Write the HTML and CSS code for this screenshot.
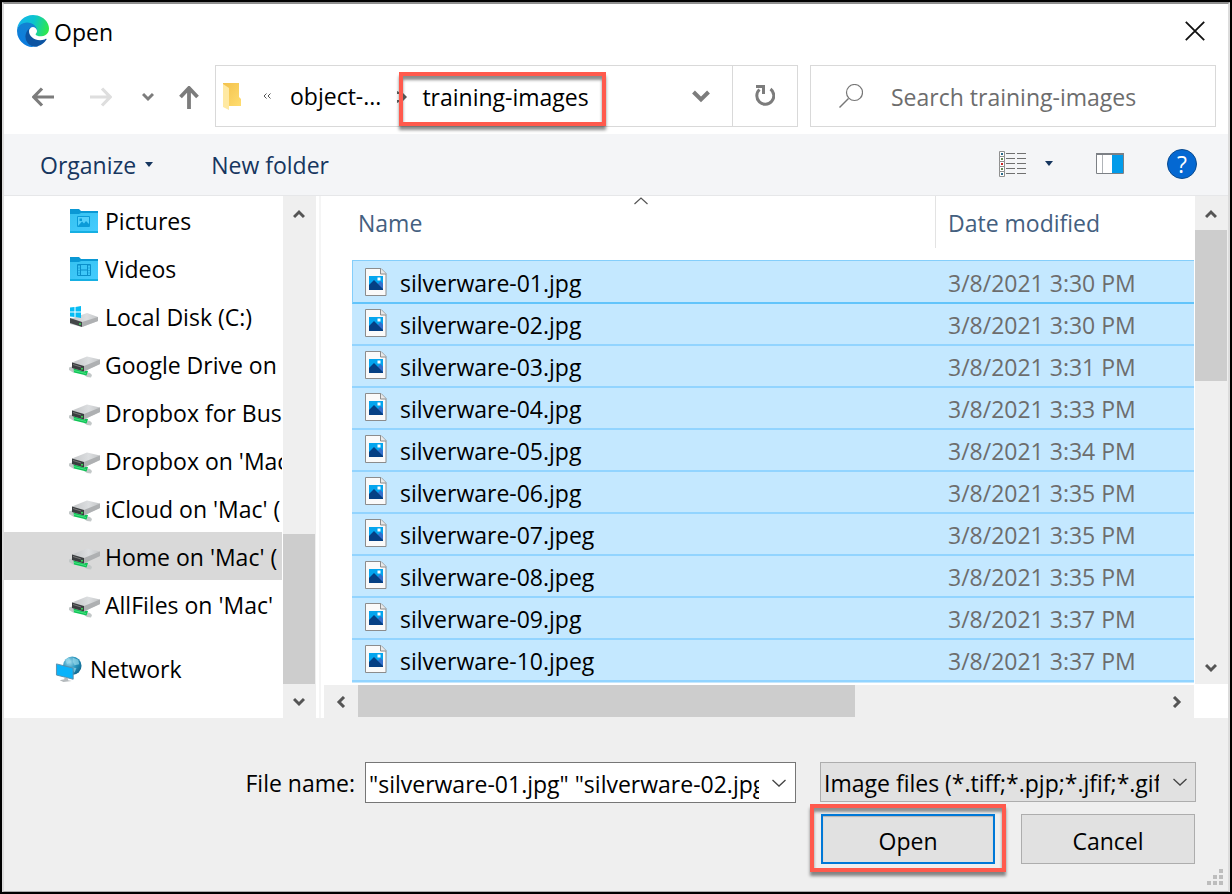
FILE: index.html
```html
<!DOCTYPE html>
<html lang="en">
<head>
<meta charset="utf-8">
<meta name="viewport" content="width=device-width, initial-scale=1">
<title>Open</title>
<link rel="stylesheet" href="styles.css">
</head>
<body>
<svg class="defs" aria-hidden="true">
  <defs>
    <linearGradient id="edgeTop" x1="0" y1="0.3" x2="1" y2="0.5"><stop offset="0" stop-color="#16b4ee"/><stop offset="0.5" stop-color="#0cc4cf"/><stop offset="1" stop-color="#2fe84c"/></linearGradient>
    <linearGradient id="edgeLeft" x1="0.6" y1="0" x2="0.3" y2="1"><stop offset="0" stop-color="#1483cf"/><stop offset="1" stop-color="#0a7be0"/></linearGradient>
    <linearGradient id="folderBody" x1="0" y1="0" x2="1" y2="1"><stop offset="0" stop-color="#36c2f0"/><stop offset="1" stop-color="#45ccff"/></linearGradient>
    <linearGradient id="metal" x1="0" y1="0" x2="1" y2="0"><stop offset="0" stop-color="#c4c6c8"/><stop offset="0.6" stop-color="#dcdee0"/><stop offset="1" stop-color="#c4c6c8"/></linearGradient>
    <radialGradient id="globe" cx="0.35" cy="0.3" r="0.8"><stop offset="0" stop-color="#a4dcee"/><stop offset="0.5" stop-color="#2794bd"/><stop offset="1" stop-color="#0c6088"/></radialGradient>
    <linearGradient id="yellow" x1="0" y1="0" x2="1" y2="1"><stop offset="0" stop-color="#f3c14b"/><stop offset="1" stop-color="#ffdd70"/></linearGradient>
    <symbol id="netdrive" viewBox="0 0 32 22">
      <path d="M0 11.500L3 10.500L7 13L5 17L0 14Z" fill="#c3c8c8"/>
      <path d="M16 16L21 17L23 19L22 21.500L18 21L15 19Z" fill="#c3c8c8"/>
      <path d="M4.500 12L19 15L17.500 19.500L5 16.500Z" fill="#0fc456"/>
      <path d="M5 14.500L17 17.500" stroke="#47e283" stroke-width="1"/>
      <path d="M3 6.500L18 .5L31 3.500V8L15 15.500L3 12Z" fill="url(#metal)"/>
      <path d="M15 10L31 3.500V8L15 15.500Z" fill="#aeb0b2"/>
      <path d="M3 6.500L15 10V15.500L3 12Z" fill="#3a3d3f"/>
      <path d="M4 8.500L12 11" stroke="#777" stroke-width="1"/>
      <circle cx="13" cy="12.800" r="1" fill="#3adb59"/>
    </symbol>
    <symbol id="image-file" viewBox="0 0 22 28">
      <path d="M.5 .5H16L21 5.500V27.500H.5Z" fill="#fafafa" stroke="#8c8c8c"/>
      <path d="M15.500 .5V6H21" fill="#e8e8e8" stroke="#8c8c8c"/>
      <path d="M4 8H18V22H4Z" fill="#04a5ee"/>
      <path d="M12 17L15.500 13L18 15.500V22H12Z" fill="#3470cc"/>
      <path d="M4 17L9 12L18 21V22H4Z" fill="#054084"/>
      <path d="M12.500 9.500H15.500V12.500H12.500Z" fill="#fff"/>
    </symbol>
    <symbol id="chev-down" viewBox="0 0 12 10"><path d="M1 2L6 7L11 2" fill="none" stroke="#555" stroke-width="3"/></symbol>
    <symbol id="chev-up" viewBox="0 0 12 10"><path d="M1 8L6 3L11 8" fill="none" stroke="#555" stroke-width="3"/></symbol>
    <symbol id="thin-down" viewBox="0 0 14 8"><path d="M.5 1L7 7L13.500 1" fill="none" stroke="#444" stroke-width="1.300"/></symbol>
  </defs>
</svg>

<main class="dialog">
  <header class="titlebar">
    <svg class="logo" viewBox="0 0 256 256" aria-hidden="true">
      <path d="M231 190.500c-3.400 1.800-6.900 3.400-10.500 4.700a101.800 101.800 0 0 1-35.900 6.400c-47.300 0-88.500-32.500-88.500-74.300a31.500 31.500 0 0 1 16.400-27.300c-42.800 1.800-53.800 46.400-53.800 72.500 0 74 68.100 81.400 82.800 81.400 7.900 0 19.800-2.300 27-4.600l1.300-.4a128.300 128.300 0 0 0 66.600-52.800 4 4 0 0 0-5.400-5.600z" fill="#0c54a2"/>
      <path d="M105.700 241.400a79.200 79.200 0 0 1-22.700-21.300 80.700 80.700 0 0 1 29.500-120c3.200-1.500 8.500-4.100 15.600-4a32.400 32.400 0 0 1 25.700 13 31.900 31.900 0 0 1 6.300 18.700c0-.2 24.500-79.600-80-79.600-43.900 0-80 41.600-80 78.200a130.200 130.200 0 0 0 12.100 56 128 128 0 0 0 156.400 67 75.500 75.500 0 0 1-62.800-8z" fill="url(#edgeLeft)"/>
      <path d="M152.300 148.900c-.9 1-3.400 2.500-3.400 5.600 0 2.600 1.700 5.200 4.800 7.300 14.300 10 41.400 8.600 41.500 8.600 10.700 0 21.100-3 30.300-8.300a61.400 61.400 0 0 0 30.400-52.900c.3-22.400-8-37.300-11.300-43.900C223.500 23.900 177.700 0 128 0A128 128 0 0 0 0 126.200c.5-36.500 36.800-66 80-66 3.500 0 23.500.3 42 10 16.300 8.600 24.900 18.900 30.800 29.200 6.200 10.700 7.300 24.100 7.300 29.500 0 5.300-2.700 13.300-7.800 19.900z" fill="url(#edgeTop)"/>
    </svg>
    <h1 class="title">Open</h1>
    <button class="close" aria-label="Close"><svg viewBox="0 0 20 20"><path d="M.8 .8L19.200 19.200M19.200 .8L.8 19.200" stroke="#111" stroke-width="1.800"/></svg></button>
  </header>

  <nav class="navbar" aria-label="Location">
    <div class="arrows">
      <button aria-label="Back"><svg class="i-arrow" viewBox="0 0 22 20"><path d="M22 10H2M10 1.500L1.800 10L10 18.500" fill="none" stroke="#7c7c7c" stroke-width="3.200"/></svg></button>
      <button aria-label="Forward"><svg class="i-arrow" viewBox="0 0 22 20"><path d="M0 10H20M12 1.500L20.200 10L12 18.500" fill="none" stroke="#dedede" stroke-width="3.200"/></svg></button>
      <button aria-label="Recent locations"><svg class="i-recent" viewBox="0 0 12 10"><path d="M1 2L6 7L11 2" fill="none" stroke="#7c7c7c" stroke-width="3"/></svg></button>
      <button aria-label="Up"><svg class="i-up" viewBox="0 0 20 23"><path d="M10 23V2M1.500 11L10 2L18.500 11" fill="none" stroke="#7c7c7c" stroke-width="3.800"/></svg></button>
    </div>
    <div class="address">
      <svg class="i-folder" viewBox="0 0 18 27" aria-hidden="true"><path d="M0 0H16V14L18 16V23H0Z" fill="url(#yellow)"/><path d="M0 1L6 5V27L0 24Z" fill="#ffe9a2"/></svg>
      <svg class="i-more" viewBox="0 0 8 6" aria-hidden="true"><path d="M3.500 .5L1 3L3.500 5.500M7.500 .5L5 3L7.500 5.500" fill="none" stroke="#555" stroke-width="1"/></svg>
      <button class="crumb">object-...</button>
      <button class="crumb marked"><svg class="i-next" viewBox="0 0 10 12" aria-hidden="true"><path d="M0 0L2 1V3H0ZM0 9H2V11L0 12ZM6 2V10L10 6Z" fill="#555"/></svg>training-images</button>
      <button class="history" aria-label="Previous locations"><svg viewBox="0 0 18 13"><path d="M1.500 2L9 9.500L16.500 2" fill="none" stroke="#7c7c7c" stroke-width="4"/></svg></button>
      <button class="refresh" aria-label="Refresh"><svg viewBox="0 0 20 22"><path d="M15.500 4A8.500 8.500 0 1 1 4.500 4.500" fill="none" stroke="#7c7c7c" stroke-width="3"/><path d="M1 0H10V9H7V3H1Z" fill="#7c7c7c"/></svg></button>
    </div>
    <label class="search">
      <svg viewBox="0 0 24 24" aria-hidden="true"><circle cx="15.500" cy="8.500" r="8" fill="none" stroke="#777" stroke-width="1.200"/><path d="M9.500 14.500L.5 23.500" stroke="#777" stroke-width="1.400"/></svg>
      <input type="search" placeholder="Search training-images" aria-label="Search training-images">
    </label>
  </nav>

  <div class="toolbar">
    <button>Organize <svg class="i-tri" viewBox="0 0 8 5" aria-hidden="true"><path d="M0 0H8L4 5Z" fill="#16365f"/></svg></button>
    <button>New folder</button>
    <div class="tools">
      <button class="view" aria-label="Change view">
        <svg class="i-view" viewBox="0 0 28 26"><g fill="#fff" stroke="#909090"><path d="M.5 .5H5.500V5.500H.5ZM.5 5.500H5.500V10.500H.5ZM.5 10.500H5.500V15.500H.5ZM.5 15.500H5.500V20.500H.5ZM.5 20.500H5.500V25.500H.5Z"/></g><path d="M7 2.500H16M18 2.500H27M7 7.500H16M18 7.500H27M7 12.500H16M18 12.500H27M7 17.500H16M18 17.500H27M7 22.500H16M18 22.500H27" stroke="#707070"/><path d="M2 2H4V4H2ZM2 22H4V24H2Z" fill="#2a6a8a"/><path d="M2 7H4V9H2ZM2 17H4V19H2Z" fill="#685"/><path d="M2 12H4V14H2Z" fill="#c22"/></svg>
        <svg class="i-tri" viewBox="0 0 8 5"><path d="M0 0H8L4 5Z" fill="#16365f"/></svg>
      </button>
      <button aria-label="Preview pane"><svg class="i-pane" viewBox="0 0 28 21"><path d="M.5 .5H27.500V20.500H.5Z" fill="#fff" stroke="#7c8085"/><path d="M0 0H28V2H0Z" fill="#7c8085"/><path d="M6.500 2V20" stroke="#b0b4b8"/><path d="M16 2H27V20H16Z" fill="#019bea"/></svg></button>
      <button class="help" aria-label="Help">?</button>
    </div>
  </div>

  <div class="body">
    <aside class="sidebar">
      <ul class="tree">
        <li><a href="#"><svg class="i-lib" viewBox="0 0 28 26"><path d="M0 1H9L11 3H28V10H0Z" fill="#0a98d4"/><path d="M0 6L9 6L11 5H28V25H0Z" fill="url(#folderBody)"/><path d="M0 23H28V25H0Z" fill="#16afe2"/><path d="M7.500 8.500H19.500V18.500H7.500Z" fill="#55d0fa" stroke="#0b9bd8"/><path d="M8 18L12 13.500L14 15.500L16 13L19 16V18ZM9.500 10.500H12V13H9.500Z" fill="#0b9bd8"/></svg>Pictures</a></li>
        <li><a href="#"><svg class="i-lib" viewBox="0 0 28 26"><path d="M0 1H9L11 3H28V10H0Z" fill="#0a98d4"/><path d="M0 6L9 6L11 5H28V25H0Z" fill="url(#folderBody)"/><path d="M0 23H28V25H0Z" fill="#16afe2"/><path d="M7.500 8.500H20.500V19.500H7.500ZM10.500 8.500V19.500M17.500 8.500V19.500M10.500 14H17.500" fill="none" stroke="#0b8fca"/><path d="M9 9V19M19 9V19" stroke="#0b8fca" stroke-dasharray="1 1.500"/></svg>Videos</a></li>
        <li><a href="#"><svg class="i-lib" viewBox="0 0 28 22"><path d="M0 13L17 7L28 11V15L12 21L0 18Z" fill="url(#metal)"/><path d="M12 16L28 11V15L12 21Z" fill="#aeb0b2"/><path d="M0 12L12 16V21L0 17Z" fill="#444749"/><circle cx="10" cy="18" r="1" fill="#3adb59"/><path d="M0 1.500L4.500 1V5.500H0ZM5.500 1L11 0V5.500H5.500ZM0 6.500H4.500V11L0 10.500ZM5.500 6.500H11V12L5.500 11Z" fill="#05bcf4"/></svg>Local Disk (C:)</a></li>
        <li><a href="#"><svg class="i-net"><use href="#netdrive"/></svg>Google Drive on</a></li>
        <li><a href="#"><svg class="i-net"><use href="#netdrive"/></svg>Dropbox for Busi</a></li>
        <li><a href="#"><svg class="i-net"><use href="#netdrive"/></svg>Dropbox on 'Mac'</a></li>
        <li><a href="#"><svg class="i-net"><use href="#netdrive"/></svg>iCloud on 'Mac' (</a></li>
        <li class="current"><a href="#"><svg class="i-net"><use href="#netdrive"/></svg>Home on 'Mac' (</a></li>
        <li><a href="#"><svg class="i-net"><use href="#netdrive"/></svg>AllFiles on 'Mac'</a></li>
        <li class="root"><a href="#"><svg class="i-lib" viewBox="0 0 28 28"><circle cx="17.500" cy="10.500" r="10" fill="url(#globe)"/><path d="M10 4L14 2L16 6L12 9ZM18 2L24 4L25 9L20 10L18 6ZM16 12L22 13L20 18Z" fill="#9bdcec" opacity=".65"/><path d="M.5 8.500L18.500 13V25L.5 20.500Z" fill="#0ab3fa" stroke="#5b8ca8"/><path d="M9 23L13 24V26L17 27L8 28L4 26L9 25Z" fill="#b5babd"/></svg>Network</a></li>
      </ul>
      <div class="vscroll">
        <button aria-label="Scroll up"><svg class="i-chev"><use href="#chev-up"/></svg></button>
        <div class="track low"><div class="thumb"></div></div>
        <button aria-label="Scroll down"><svg class="i-chev"><use href="#chev-down"/></svg></button>
      </div>
    </aside>

    <section class="files" aria-label="Files">
      <div class="list">
        <svg class="i-sort" viewBox="0 0 14 8" aria-hidden="true"><path d="M.5 7L7 1L13.500 7" fill="none" stroke="#555" stroke-width="1.200"/></svg>
        <table>
          <thead><tr><th class="c-name" scope="col">Name</th><th class="c-date" scope="col">Date modified</th></tr></thead>
          <tbody>
            <tr class="focused"><td><svg class="i-file"><use href="#image-file"/></svg>silverware-01.jpg</td><td>3/8/2021 3:30 PM</td></tr>
            <tr><td><svg class="i-file"><use href="#image-file"/></svg>silverware-02.jpg</td><td>3/8/2021 3:30 PM</td></tr>
            <tr><td><svg class="i-file"><use href="#image-file"/></svg>silverware-03.jpg</td><td>3/8/2021 3:31 PM</td></tr>
            <tr><td><svg class="i-file"><use href="#image-file"/></svg>silverware-04.jpg</td><td>3/8/2021 3:33 PM</td></tr>
            <tr><td><svg class="i-file"><use href="#image-file"/></svg>silverware-05.jpg</td><td>3/8/2021 3:34 PM</td></tr>
            <tr><td><svg class="i-file"><use href="#image-file"/></svg>silverware-06.jpg</td><td>3/8/2021 3:35 PM</td></tr>
            <tr><td><svg class="i-file"><use href="#image-file"/></svg>silverware-07.jpeg</td><td>3/8/2021 3:35 PM</td></tr>
            <tr><td><svg class="i-file"><use href="#image-file"/></svg>silverware-08.jpeg</td><td>3/8/2021 3:35 PM</td></tr>
            <tr><td><svg class="i-file"><use href="#image-file"/></svg>silverware-09.jpg</td><td>3/8/2021 3:37 PM</td></tr>
            <tr><td><svg class="i-file"><use href="#image-file"/></svg>silverware-10.jpeg</td><td>3/8/2021 3:37 PM</td></tr>
          </tbody>
        </table>
      </div>
      <div class="vscroll">
        <button aria-label="Scroll up"><svg class="i-chev"><use href="#chev-up"/></svg></button>
        <div class="track high"><div class="thumb"></div></div>
        <button aria-label="Scroll down"><svg class="i-chev"><use href="#chev-down"/></svg></button>
      </div>
      <div class="hscroll">
        <button aria-label="Scroll left"><svg class="i-side" viewBox="0 0 10 12"><path d="M8 1L3 6L8 11" fill="none" stroke="#555" stroke-width="3"/></svg></button>
        <div class="htrack"><div class="hthumb"></div></div>
        <button aria-label="Scroll right"><svg class="i-side" viewBox="0 0 10 12"><path d="M2 1L7 6L2 11" fill="none" stroke="#555" stroke-width="3"/></svg></button>
      </div>
    </section>
  </div>

  <footer class="footer">
    <label class="fn-label" for="filename">File name:</label>
    <div class="combo">
      <input id="filename" type="text" value='"silverware-01.jpg" "silverware-02.jpg" "silverware-03.jpg"'>
      <button aria-label="Show file names"><svg class="i-thin"><use href="#thin-down"/></svg></button>
    </div>
    <div class="type">
      <select aria-label="File type"><option>Image files (*.tiff;*.pjp;*.jfif;*.gif;*.svg;*.bmp)</option></select>
      <svg class="i-thin" aria-hidden="true"><use href="#thin-down"/></svg>
    </div>
    <div class="actions">
      <div class="open-mark"><button class="btn primary">Open</button></div>
      <button class="btn">Cancel</button>
    </div>
    <svg class="grip" viewBox="0 0 16 16" aria-hidden="true"><path d="M12 0H16V4H12ZM6 6H10V10H6ZM12 6H16V10H12ZM0 12H4V16H0ZM6 12H10V16H6ZM12 12H16V16H12Z" fill="#bdbdbd"/></svg>
  </footer>
</main>
</body>
</html>
```
FILE: styles.css
```css
* { box-sizing: border-box; }
body {
  margin: 0;
  padding: 2px;
  min-height: 100vh;
  display: flex;
  background: #000;
  color: #000;
  font: 23px/30px "Open Sans", "Noto Sans", sans-serif;
}
button, input, select { font: inherit; color: inherit; }
button { display: flex; align-items: center; border: 0; padding: 0; background: none; }
svg { display: block; flex: none; }
.defs { position: absolute; width: 0; height: 0; }

.dialog {
  flex: 1;
  min-width: 0;
  display: flex;
  flex-direction: column;
  background: #fff;
  border: 2px solid #dcdcdc;
  border-top-color: #8f8f8f;
  border-bottom: 1px solid #aaa;
}

.titlebar { display: flex; align-items: center; height: 58px; padding: 0 23px 4px 13px; }
.logo { width: 32px; height: 32px; }
.title { margin: 0 auto 0 5px; font-size: 23px; font-weight: 400; padding-top: 2px; }
.close svg { width: 20px; height: 20px; }

.navbar { display: grid; grid-template-columns: 183px minmax(0, 583fr) minmax(0, 418fr); height: 72px; padding: 3px 12px 7px 28px; }
.arrows { display: flex; align-items: center; gap: 30px; padding-top: 2px; }
.i-arrow { width: 22px; height: 20px; }
.i-recent { width: 12px; height: 10px; }
.arrows button:nth-child(2) { margin-left: 6px; }
.arrows button:nth-child(4) { margin-left: -5px; }
.i-up { width: 20px; height: 23px; }
.address { display: flex; align-items: center; border: 1px solid #d9d9d9; padding-left: 7px; }
.i-folder { width: 18px; height: 27px; }
.i-more { width: 8px; height: 6px; margin: 0 19px 0 22px; }
.crumb { white-space: nowrap; height: 30px; }
.marked {
  align-self: stretch;
  height: 54px;
  margin: 6px auto 0 18px;
  padding: 0 13px 4px 0;
  gap: 15px;
  border: 4px solid #ff5a4d;
  box-shadow: 0 4px 3px rgba(0, 0, 0, .45), inset 0 4px 3px rgba(0, 0, 0, .45);
}
.i-next { width: 10px; height: 12px; margin-left: -6px; }
.history { padding: 0 22px; }
.history svg { width: 18px; height: 13px; }
.refresh { align-self: stretch; width: 65px; border-left: 1px solid #d9d9d9; justify-content: center; }
.refresh svg { width: 20px; height: 22px; }
.search { display: flex; align-items: center; gap: 28px; margin-left: 12px; padding-left: 28px; border: 1px solid #d9d9d9; }
.search svg { width: 24px; height: 24px; }
.search input { flex: 1; min-width: 0; border: 0; padding: 2px 0 0; background: none; outline: 0; }
.search input::placeholder { color: #6d6d6d; opacity: 1; }

.toolbar { display: flex; align-items: center; gap: 58px; height: 62px; padding: 0 31px 0 36px; background: #f4f5f7; border-bottom: 1px solid #e6e7e9; color: #16365f; }
.toolbar button { gap: 9px; }
.i-tri { width: 8px; height: 5px; }
.tools { display: flex; align-items: center; margin-left: auto; gap: 43px; padding-bottom: 2px; }
.tools .view { gap: 18px; }
.i-view { width: 28px; height: 26px; }
.i-pane { width: 28px; height: 21px; }
.toolbar .help { width: 30px; height: 30px; justify-content: center; border: 1px solid #0a4b8f; border-radius: 50%; background: #0468d2; color: #fff; }

.body { display: flex; height: 522px; }
.sidebar { display: flex; width: 312px; overflow: hidden; }
.tree { flex: 1; min-width: 0; margin: 0; padding: 0; list-style: none; overflow: hidden; }
.tree li { margin-right: 1px; overflow: hidden; }
.tree a { display: flex; align-items: center; height: 48px; padding: 2px 0 0 66px; color: #000; text-decoration: none; white-space: nowrap; }
.tree .current { background: #d9d9d9; }
.tree .root { margin-top: 16px; }
.tree .root a { padding-left: 51px; }
.i-lib { width: 28px; height: 26px; margin-right: 7px; }
.i-net { width: 32px; height: 22px; margin: 4px 4px 0 -1px; }
.vscroll { display: flex; flex-direction: column; width: 33px; background: #efefef; }
.vscroll button { height: 34px; width: 32px; justify-content: center; padding-top: 2px; }
.i-chev { width: 12px; height: 10px; }
.track { flex: 1; display: flex; flex-direction: column; padding-right: 1px; }
.track.low { justify-content: flex-end; }
.low .thumb { height: 33%; }
.high .thumb { height: 36%; }
.thumb { background: #cdcdcd; }

.files {
  flex: 1;
  min-width: 0;
  display: grid;
  grid-template: minmax(0, 1fr) 34px / minmax(0, 1fr) 33px;
  margin-left: 3px;
  border-left: 2px solid #f5f5f5;
}
.list { position: relative; overflow: hidden; margin-right: 1px; padding-left: 31px; }
.list::after { content: ""; display: block; height: 1px; background: #c4e8ff; }
.i-sort { position: absolute; top: 1px; left: 313px; width: 14px; height: 8px; }
table { width: 100%; table-layout: fixed; border-collapse: separate; border-spacing: 0; }
th { height: 64px; padding: 0 0 10px 13px; text-align: left; font-weight: 400; color: #44607f; }
.c-name { padding-left: 6px; }
.c-date { width: 259px; background: linear-gradient(#e3e3e3, #e3e3e3) left top / 1px 52px no-repeat; }
td { height: 42px; padding: 1px 0 0 13px; background: #c4e8ff; border-bottom: 2px solid #92d4ff; white-space: nowrap; color: #6d6d6d; }
td:first-child { display: flex; align-items: center; gap: 13px; color: #000; }
.i-file { width: 22px; height: 28px; margin-top: -3px; }
.focused td { height: 44px; padding-top: 3px; border-top: 1px solid #84cefb; border-bottom-color: #62c4fb; }
.focused td:first-child { border-left: 1px solid #84cefb; padding-left: 12px; }
.hscroll { display: flex; background: #efefef; margin: 1px 1px 0 3px; }
.hscroll button { width: 34px; justify-content: center; }
.i-side { width: 10px; height: 12px; }
.htrack { flex: 1; }
.hthumb { width: 62%; height: 32px; background: #cdcdcd; }

.footer {
  position: relative;
  flex: 1;
  display: grid;
  grid-template-columns: 361px minmax(0, 431fr) minmax(0, 400fr);
  grid-template-rows: 42px auto;
  align-content: start;
  padding: 44px 32px 0 0;
  background: #efefef;
}
.fn-label { text-align: right; padding: 6px 10px 0 0; }
.combo { display: flex; height: 41px; border: 1px solid #767676; background: #fff; }
.combo input { flex: 1; min-width: 0; border: 0; outline: 0; padding: 2px 0 0 3px; background: none; }
.combo button { width: 32px; margin-left: 4px; justify-content: center; }
.i-thin { width: 14px; height: 8px; }
.type { position: relative; margin-left: 24px; }
.type select { width: 100%; height: 40px; appearance: none; border: 1px solid #adadad; border-radius: 0; padding: 2px 36px 0 3px; background: #e1e1e1; }
.type .i-thin { position: absolute; top: 16px; right: 9px; }
.actions { grid-column: 3; display: grid; grid-template-columns: minmax(0, 196fr) minmax(0, 174fr); align-items: start; column-gap: 15px; margin: 0 1px 0 14px; }
.open-mark { border: 4px solid #ff5a4d; padding: 6px 7px 4px; box-shadow: 0 4px 3px rgba(0, 0, 0, .45), inset 0 4px 3px rgba(0, 0, 0, .4); }
.btn { width: 100%; height: 50px; justify-content: center; background: #e1e1e1; border: 1px solid #adadad; padding-top: 3px; }
.actions > .btn { margin-top: 10px; }
.primary { border: 2px solid #0078d7; box-shadow: inset 0 1px 1px rgba(0, 0, 0, .2); }
.grip { position: absolute; right: 5px; bottom: 6px; width: 16px; height: 16px; }
```
